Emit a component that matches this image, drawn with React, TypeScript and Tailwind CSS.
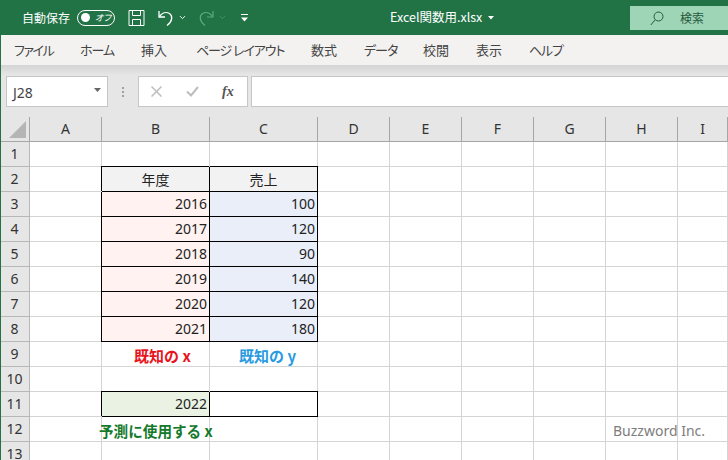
import { ChevronDown } from "lucide-react";

const jp = "font-['Noto_Sans_CJK_JP','Liberation_Sans',sans-serif]";

const tabs = [
  { label: "ファイル", w: "w-[66px] tracking-[-1.4px]" },
  { label: "ホーム", w: "w-[61px] tracking-[-1px]" },
  { label: "挿入", w: "w-[55px]" },
  { label: "ページ レイアウト", w: "w-[115px] tracking-[-1.1px]" },
  { label: "数式", w: "w-[53px]" },
  { label: "データ", w: "w-[59px] tracking-[-1px]" },
  { label: "校閲", w: "w-[53px]" },
  { label: "表示", w: "w-[53px]" },
  { label: "ヘルプ", w: "w-[60px] tracking-[-1.2px]" },
];

const columns = ["A", "B", "C", "D", "E", "F", "G", "H", "I"];
const colWidths = ["w-[72px]", "w-[108px]", "w-[108px]", "w-[72px]", "w-[72px]", "w-[72px]", "w-[72px]", "w-[72px]", "w-[50px]"];
const rows = [1, 2, 3, 4, 5, 6, 7, 8, 9, 10, 11, 12, 13];

const data: Record<number, [string, string]> = {
  3: ["2016", "100"],
  4: ["2017", "120"],
  5: ["2018", "90"],
  6: ["2019", "140"],
  7: ["2020", "120"],
  8: ["2021", "180"],
};

type Cell = { text?: string; className?: string };

// borders sit on the right/bottom of each cell, the shadow draws the outer left/top edge
function getCell(row: number, col: string): Cell {
  if (col === "B" || col === "C") {
    const i = col === "B" ? 0 : 1;
    if (row === 2) {
      return {
        text: i === 0 ? "年度" : "売上",
        className: `bg-[#f2f2f2] justify-center border-black ${i === 0 ? "shadow-[-1px_-1px_0_0_#000]" : "shadow-[0_-1px_0_0_#000]"}`,
      };
    }
    if (data[row]) {
      return {
        text: data[row][i],
        className: `${i === 0 ? "bg-[#fff2f0] shadow-[-1px_0_0_0_#000]" : "bg-[#e9eef9]"} justify-end pr-[2px] border-black`,
      };
    }
    if (row === 9) {
      return {
        text: i === 0 ? "既知の x" : "既知の y",
        className: `justify-center pt-[3px] text-[15px] font-bold ${i === 0 ? "pl-[14px] text-[#e8141c]" : "pl-[8px] text-[#2a9be0]"}`,
      };
    }
    if (row === 11) {
      return {
        text: i === 0 ? "2022" : undefined,
        className: `${i === 0 ? "bg-[#e9f2e3] shadow-[-1px_-1px_0_0_#000]" : "bg-white shadow-[0_-1px_0_0_#000]"} justify-end pr-[2px] border-black`,
      };
    }
  }
  return {};
}

function TitleBar() {
  return (
    <div className={`flex h-[35px] items-center bg-[#217346] text-white ${jp}`}>
      <span className="ml-[22px] text-[12px]">自動保存</span>
      <div className="ml-[7px] flex h-[16px] w-[38px] items-center rounded-full border border-white px-[3px]">
        <span className="h-[9px] w-[9px] rounded-full bg-white" />
        <span className="ml-[5px] text-[9px] italic leading-none [font-feature-settings:'palt']">オフ</span>
      </div>
      <svg className="ml-[13px]" width="17" height="18" viewBox="0 0 17 18" fill="none" stroke="#fff" strokeWidth="1">
        <path d="M1 1.5h15v15H1z" />
        <path d="M4.5 1.5v5h8v-5M4.5 16.5v-6h8v6" />
      </svg>
      <svg className="ml-[12px]" width="18" height="18" viewBox="0 0 18 18" fill="none" stroke="#fff" strokeWidth="1.3">
        <path d="M2 2v6h6" />
        <path d="M2.5 7.5C5 4 9 2.5 12.5 4.5c3.5 2.5 3 8-2.5 12" />
      </svg>
      <ChevronDown className="ml-[3px]" size={9} strokeWidth={2.5} color="#fff" />
      <svg className="ml-[10px]" width="18" height="18" viewBox="0 0 18 18" fill="none" stroke="#5fa77f" strokeWidth="1.2">
        <path d="M16 2v6h-6" />
        <path d="M15.5 7.5C13 4 9 2.5 5.5 4.5c-3.5 2.5-3 8 2.5 12" />
      </svg>
      <ChevronDown className="ml-[3px]" size={9} strokeWidth={1.5} color="#5fa77f" />
      <svg className="ml-[14px]" width="7" height="8" viewBox="0 0 7 8" fill="#fff">
        <path d="M0 0h7v1H0zM0 3.5h7L3.5 7.5z" />
      </svg>
      <span className="ml-[142px] text-[12.5px]">Excel関数用.xlsx</span>
      <svg className="ml-[6px]" width="6" height="4" viewBox="0 0 6 4" fill="#fff">
        <path d="M0 0h6L3 3.5z" />
      </svg>
      <div className="mt-[1px] ml-auto flex h-[24px] w-[98px] items-center bg-[#9fd5b7] text-[#26593d]">
        <svg className="ml-[20px]" width="14" height="15" viewBox="0 0 14 15" fill="none" stroke="#26593d" strokeWidth="1">
          <circle cx="8.5" cy="5.5" r="4.5" />
          <path d="M5 9 L0.8 14" />
        </svg>
        <span className="ml-[16px] text-[12px]">検索</span>
      </div>
    </div>
  );
}

function TabBar() {
  return (
    <div className={`flex h-[30px] items-center bg-[#f3f2f1] pl-[14px] text-[13px] text-[#444] [font-feature-settings:'palt'] ${jp}`}>
      {tabs.map((t) => (
        <span key={t.label} className={`${t.w} shrink-0 whitespace-nowrap`}>
          {t.label}
        </span>
      ))}
    </div>
  );
}

function FormulaBar() {
  return (
    <div className="flex h-[52px] items-start bg-[#e6e6e6] bg-gradient-to-b from-[#d4d4d4] to-[#e6e6e6] to-[10px] pt-[11px] pl-[6px]">
      <div className="flex h-[31px] w-[102px] items-center justify-between border border-[#c6c6c6] bg-white pr-[6px] pl-[6px] font-['Noto_Sans',sans-serif] text-[14px] text-[#444]">
        <span className="pt-[2px]">J28</span>
        <svg className="mb-[4px]" width="7" height="4" viewBox="0 0 7 4" fill="#666">
          <path d="M0 0h7L3.5 4z" />
        </svg>
      </div>
      <div className="flex h-[31px] w-[30px] flex-col items-center justify-center gap-[2px]">
        <span className="h-[2px] w-[2px] bg-[#a0a0a0]" />
        <span className="h-[2px] w-[2px] bg-[#a0a0a0]" />
        <span className="h-[2px] w-[2px] bg-[#a0a0a0]" />
      </div>
      <div className="flex h-[31px] w-[110px] items-center border border-[#c6c6c6] bg-white">
        <svg className="ml-[12px]" width="11" height="11" viewBox="0 0 11 11" stroke="#bdbdbd" strokeWidth="1.5">
          <path d="M0.5 0.5l10 10M10.5 0.5l-10 10" />
        </svg>
        <svg className="ml-[24px]" width="13" height="11" viewBox="0 0 13 11" fill="none" stroke="#bdbdbd" strokeWidth="2">
          <path d="M1 5.5l4 4 7-8.5" />
        </svg>
        <span className="ml-[23px] font-['Liberation_Serif',serif] text-[14px] font-bold italic leading-none text-[#555]">
          fx
        </span>
      </div>
      <div className="ml-[3px] h-[31px] flex-1 border-y border-l border-[#c6c6c6] bg-white" />
    </div>
  );
}

function Sheet() {
  return (
    <div className="relative font-['Noto_Sans',sans-serif] text-[14px] leading-none text-[#222]">
      <div className="flex h-[25px]">
        <div className="flex w-[30px] shrink-0 items-end justify-end border-r border-b border-[#a6a6a6] bg-[#e6e6e6] pr-[3px] pb-[3px]">
          <svg width="17" height="17" viewBox="0 0 17 17" fill="#b5b5b5">
            <path d="M17 0v17H0z" />
          </svg>
        </div>
        {columns.map((c, i) => (
          <div
            key={c}
            className={`${colWidths[i]} flex shrink-0 items-center justify-center border-r border-b border-[#a6a6a6] bg-[#e6e6e6] text-[#333]`}
          >
            {c}
          </div>
        ))}
      </div>
      {rows.map((r) => (
        <div key={r} className="flex h-[25px]">
          <div className="flex w-[30px] shrink-0 items-center justify-center border-r border-b border-[#b8b8b8] bg-[#e6e6e6] text-[#333]">
            {r}
          </div>
          {columns.map((c, i) => {
            const cell = getCell(r, c);
            const jpText = cell.text && /[^\x00-\x7f]/.test(cell.text);
            return (
              <div
                key={c}
                className={`${colWidths[i]} flex shrink-0 items-center border-r border-b border-[#d4d4d4] ${cell.className ?? ""} ${jpText ? jp : ""}`}
              >
                {cell.text}
              </div>
            );
          })}
        </div>
      ))}
      <span className={`absolute top-[307px] left-[99px] whitespace-nowrap text-[14.6px] font-bold leading-none text-[#14792b] ${jp}`}>
        予測に使用する x
      </span>
      <span className="absolute top-[307px] left-[613px] whitespace-nowrap text-[14px] leading-none text-[#7d7d7d]">
        Buzzword Inc.
      </span>
    </div>
  );
}

export default function App() {
  return (
    <div className="relative h-[460px] w-[728px] overflow-hidden bg-white">
      <TitleBar />
      <TabBar />
      <FormulaBar />
      <Sheet />
      <div className="absolute top-0 bottom-0 left-0 w-[1px] bg-[#217346]" />
    </div>
  );
}
